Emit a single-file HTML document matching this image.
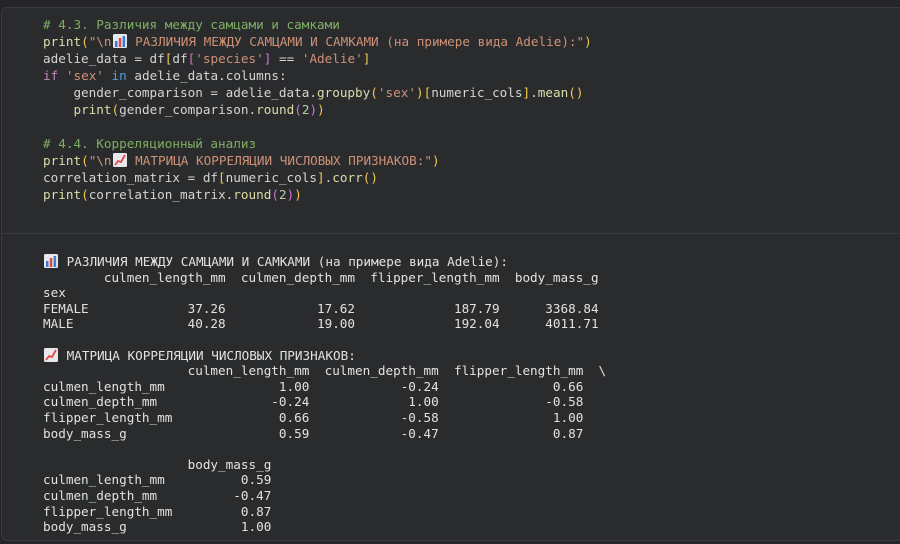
<!DOCTYPE html>
<html><head><meta charset="utf-8"><style>
html,body{margin:0;padding:0;background:#252527;width:900px;height:544px;overflow:hidden}
.cell{position:absolute;left:1px;top:7px;width:905px;height:532px;background:#2a2b2d;border:1px solid #3a3b3d;border-radius:6px}
.div{position:absolute;left:1px;top:233px;width:900px;height:1px;background:#3a3b3d}
pre{margin:0;position:absolute;left:43px;font-family:"DejaVu Sans Mono","Liberation Mono",monospace;font-size:12.65px;white-space:pre}
.code{top:16px;line-height:17px;color:#d4d4d4}
.out{top:254px;line-height:15.6px;color:#e2e2e2}
.c{color:#7fae63}.f{color:#dcdcaa}.s{color:#ce9178}.b{color:#f2c94c}.p{color:#d36fd6}.k{color:#c586c0}.kb{color:#569cd6}.n{color:#b5cea8}
.e{display:inline-block;width:16px;height:14px;vertical-align:-2px}
</style></head><body>
<div class="cell"></div><div class="div"></div>
<pre class="code"><span class="c"># 4.3. Различия между самцами и самками</span>
<span class="f">print</span><span class="b">(</span><span class="s">"\n<svg class="e" viewBox="0 0 16 14"><rect x="1" y="0" width="14" height="14" rx="1.5" fill="#e8e8ec"/><rect x="3" y="7" width="2.5" height="6" fill="#3a7bd5"/><rect x="6.8" y="4" width="2.5" height="9" fill="#e04848"/><rect x="10.6" y="2" width="2.5" height="11" fill="#3a7bd5"/></svg> РАЗЛИЧИЯ МЕЖДУ САМЦАМИ И САМКАМИ (на примере вида Adelie):"</span><span class="b">)</span>
adelie_data = df<span class="b">[</span>df<span class="p">[</span><span class="s">'species'</span><span class="p">]</span> == <span class="s">'Adelie'</span><span class="b">]</span>
<span class="k">if</span> <span class="s">'sex'</span> <span class="kb">in</span> adelie_data.columns:
    gender_comparison = adelie_data.<span class="f">groupby</span><span class="b">(</span><span class="s">'sex'</span><span class="b">)[</span>numeric_cols<span class="b">]</span>.<span class="f">mean</span><span class="b">()</span>
    <span class="f">print</span><span class="b">(</span>gender_comparison.<span class="f">round</span><span class="p">(</span><span class="n">2</span><span class="p">)</span><span class="b">)</span>

<span class="c"># 4.4. Корреляционный анализ</span>
<span class="f">print</span><span class="b">(</span><span class="s">"\n<svg class="e" viewBox="0 0 16 14"><rect x="1" y="0" width="14" height="14" rx="1.5" fill="#e8e8ec"/><polyline points="3,12 6,8 9,9 13,2" fill="none" stroke="#e04848" stroke-width="1.8"/></svg> МАТРИЦА КОРРЕЛЯЦИИ ЧИСЛОВЫХ ПРИЗНАКОВ:"</span><span class="b">)</span>
correlation_matrix = df<span class="b">[</span>numeric_cols<span class="b">]</span>.<span class="f">corr</span><span class="b">()</span>
<span class="f">print</span><span class="b">(</span>correlation_matrix.<span class="f">round</span><span class="p">(</span><span class="n">2</span><span class="p">)</span><span class="b">)</span></pre>
<pre class="out"><svg class="e" viewBox="0 0 16 14"><rect x="1" y="0" width="14" height="14" rx="1.5" fill="#e8e8ec"/><rect x="3" y="7" width="2.5" height="6" fill="#3a7bd5"/><rect x="6.8" y="4" width="2.5" height="9" fill="#e04848"/><rect x="10.6" y="2" width="2.5" height="11" fill="#3a7bd5"/></svg> РАЗЛИЧИЯ МЕЖДУ САМЦАМИ И САМКАМИ (на примере вида Adelie):
        culmen_length_mm  culmen_depth_mm  flipper_length_mm  body_mass_g
sex
FEMALE             37.26            17.62             187.79      3368.84
MALE               40.28            19.00             192.04      4011.71

<svg class="e" viewBox="0 0 16 14"><rect x="1" y="0" width="14" height="14" rx="1.5" fill="#e8e8ec"/><polyline points="3,12 6,8 9,9 13,2" fill="none" stroke="#e04848" stroke-width="1.8"/></svg> МАТРИЦА КОРРЕЛЯЦИИ ЧИСЛОВЫХ ПРИЗНАКОВ:
                   culmen_length_mm  culmen_depth_mm  flipper_length_mm  \
culmen_length_mm               1.00            -0.24               0.66
culmen_depth_mm               -0.24             1.00              -0.58
flipper_length_mm              0.66            -0.58               1.00
body_mass_g                    0.59            -0.47               0.87

                   body_mass_g
culmen_length_mm          0.59
culmen_depth_mm          -0.47
flipper_length_mm         0.87
body_mass_g               1.00</pre>
</body></html>
